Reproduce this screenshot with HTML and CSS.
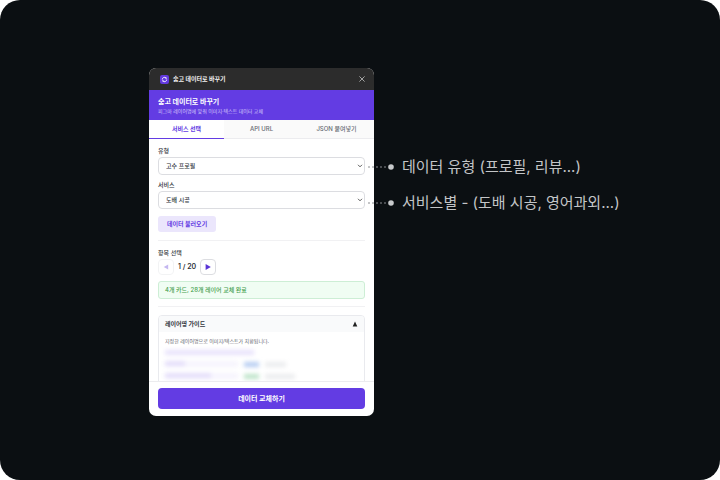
FILE: index.html
```html
<!DOCTYPE html>
<html lang="ko">
<head>
<meta charset="utf-8">
<title>숨고 데이터로 바꾸기</title>
<link rel="stylesheet" href="styles.css">
</head>
<body>
<main class="stage">
  <section class="panel">
    <div class="titlebar">
      <svg class="logo" viewBox="0 0 18 18" aria-hidden="true">
        <rect width="18" height="18" rx="4" fill="#6239df"/>
        <path d="M4.6 9A4.4 4.4 0 0 1 12 5.8M13.4 9A4.4 4.4 0 0 1 6 12.2" fill="none" stroke="#fff" stroke-width="1.8"/>
        <path d="M13.4 4.4v3.2h-3.2zM4.6 13.6v-3.2h3.2z" fill="#fff"/>
      </svg>
      <span class="titlebar-name">숨고 데이터로 바꾸기</span>
      <button class="close" type="button" aria-label="닫기">
        <svg viewBox="0 0 6 6" aria-hidden="true"><path d="M.4.4l5.2 5.2M5.6.4L.4 5.6" stroke="#d6d6d6" stroke-width=".7"/></svg>
      </button>
    </div>
    <header class="hero">
      <h1>숨고 데이터로 바꾸기</h1>
      <p>피그마 레이어명에 맞춰 이미지·텍스트 데이터 교체</p>
    </header>
    <nav class="tabs">
      <button class="tab active" type="button">서비스 선택</button>
      <button class="tab" type="button">API URL</button>
      <button class="tab" type="button">JSON 붙여넣기</button>
    </nav>
    <div class="content">
      <div class="field">
        <label for="kind">유형</label>
        <div class="select">
          <select id="kind"><option>고수 프로필</option></select>
          <svg viewBox="0 0 6 4" aria-hidden="true"><path d="M1 .8l2 2 2-2" fill="none" stroke="#333" stroke-width=".8"/></svg>
        </div>
      </div>
      <div class="field">
        <label for="service">서비스</label>
        <div class="select">
          <select id="service"><option>도배 시공</option></select>
          <svg viewBox="0 0 6 4" aria-hidden="true"><path d="M1 .8l2 2 2-2" fill="none" stroke="#333" stroke-width=".8"/></svg>
        </div>
      </div>
      <button class="load" type="button">데이터 불러오기</button>
      <div class="picker">
        <h2>항목 선택</h2>
        <div class="pager">
          <button class="step" type="button" aria-label="이전" disabled><svg viewBox="0 0 6 6" aria-hidden="true"><path d="M5.2.5v5L.7 3z"/></svg></button>
          <span>1 / 20</span>
          <button class="step" type="button" aria-label="다음"><svg viewBox="0 0 6 6" aria-hidden="true"><path d="M.6 0v6L5.8 3z"/></svg></button>
        </div>
        <p class="status">4개 카드, 28개 레이어 교체 완료</p>
      </div>
      <section class="guide">
        <button class="guide-head" type="button">레이어명 가이드
          <svg viewBox="0 0 6 6" aria-hidden="true"><path d="M3 .5l2.3 5H.7z"/></svg>
        </button>
        <div class="guide-body">
          <p>지정한 레이어명으로 이미지/텍스트가 치환됩니다.</p>
          <div class="masked" aria-hidden="true">
            <i class="bar heading"></i>
            <div class="masked-row"><span class="cell"><i class="bar short"></i></span><i class="bar blue"></i><i class="bar note"></i></div>
            <div class="masked-row"><span class="cell"><i class="bar long"></i></span><i class="bar green"></i><i class="bar note wide"></i></div>
          </div>
        </div>
      </section>
    </div>
    <footer class="actions"><button class="submit" type="button">데이터 교체하기</button></footer>
  </section>
  <ul class="callouts">
    <li><svg viewBox="0 0 26 6" aria-hidden="true"><path class="lead" d="M0 3h20"/><circle cx="23" cy="3" r="2.8"/></svg>데이터 유형 (프로필, 리뷰...)</li>
    <li><svg viewBox="0 0 26 6" aria-hidden="true"><path class="lead" d="M0 3h20"/><circle cx="23" cy="3" r="2.8"/></svg>서비스별 - (도배 시공, 영어과외...)</li>
  </ul>
</main>
</body>
</html>
```
FILE: styles.css
```css
* { box-sizing: border-box; margin: 0; padding: 0; }

body {
  background: #fff;
  color: #30343b;
  font: 500 6px/8px Inter, "Noto Sans CJK KR", sans-serif;
}

button, select { font: inherit; color: inherit; border: 0; background: none; }
h1, h2 { font: inherit; }
svg { display: block; flex: none; }

.stage {
  display: flex;
  align-items: flex-start;
  min-height: 100vh;
  padding: 68px 0 64px 149px;
  background: #0b0f12;
  border-radius: 20px;
}

.panel {
  flex: none;
  width: 225px;
  overflow: hidden;
  background: #fff;
  border-radius: 7px;
}

.titlebar {
  display: flex;
  align-items: center;
  gap: 4px;
  height: 22px;
  padding: 0 9px 0 11px;
  background: #2c2c2c;
  color: #f2f2f2;
  font-weight: 700;
}
.logo { width: 9px; height: 9px; }
.titlebar-name { flex: 1; }
.close svg { width: 6px; height: 6px; }

.hero {
  height: 30px;
  padding: 6px 9px 0;
  background: #633ce3;
  color: #fff;
}
.hero h1 { font-size: 7px; line-height: 11px; font-weight: 700; }
.hero p { color: #d3c7fa; font-size: 5px; font-weight: 400; }

.tabs {
  display: grid;
  grid-template-columns: repeat(3, 1fr);
  height: 19px;
  background: #fafafa;
}
.tab { border-bottom: 1px solid #ececef; color: #666b73; }
.tab.active { background: #fff; border-color: #633ce3; color: #633ce3; font-weight: 700; }

.content { height: 242px; padding: 8px 9px 0; overflow: hidden; }

.field { margin-bottom: 6px; }
.field label { display: block; margin-bottom: 2px; }
.select { position: relative; }
.select select {
  display: block;
  width: 100%;
  height: 18px;
  padding: 0 7px;
  appearance: none;
  border: 1px solid #dcdde1;
  border-radius: 4px;
  background: #fff;
}
.select svg { position: absolute; top: 7px; right: 2px; width: 6px; height: 4px; }

.load {
  height: 16px;
  padding: 0 9px;
  margin-top: 1px;
  border-radius: 3px;
  background: #ebe6fc;
  color: #633ce3;
  font-weight: 600;
}

.picker {
  margin: 8px 0;
  padding: 8px 0 7px;
  border-top: 1px solid #f1f1f3;
  border-bottom: 1px solid #f1f1f3;
}
.pager { display: flex; align-items: center; gap: 4px; margin: 2px 0 6px; font-size: 7px; font-weight: 600; }
.step {
  display: grid;
  place-items: center;
  width: 16px;
  height: 16px;
  border: 1px solid #dcdde1;
  border-radius: 4px;
}
.step svg { width: 6px; height: 6px; fill: #5a35d6; }
.step:disabled { opacity: .35; }
.status {
  padding: 4px 6px;
  border: 1px solid #cdeed5;
  border-radius: 3px;
  background: #f0fdf3;
  color: #45a04d;
}

.guide { border: 1px solid #e9eaee; border-radius: 4px; overflow: hidden; }
.guide-head {
  display: flex;
  align-items: center;
  justify-content: space-between;
  width: 100%;
  height: 16px;
  padding: 0 6px;
  background: #f9fafb;
  font-weight: 600;
}
.guide-head svg { width: 6px; height: 6px; fill: #222; }
.guide-body { padding: 5px 6px 12px; font-weight: 400; color: #5f646c; }
.guide-body p { font-size: 5px; }

.masked { display: grid; gap: 6px; padding-top: 5px; filter: blur(2px); }
.masked-row { display: flex; align-items: center; gap: 6px; height: 6px; }
.cell { width: 73px; height: 6px; background: #f6f4fd; }
.bar { display: block; height: 5px; }
.heading { width: 89px; background: #e8e2fb; }
.short { width: 20px; background: #e4ddfa; }
.long { width: 46px; background: #e4ddfa; }
.blue { width: 15px; background: #b5ccf2; }
.green { width: 15px; background: #bce3c8; }
.note { width: 21px; background: #ebecee; }
.wide { width: 30px; }

.actions { padding: 6px 9px 7px; border-top: 1px solid #ececef; }
.submit {
  display: block;
  width: 100%;
  height: 21px;
  border-radius: 4px;
  background: #633ce3;
  color: #fff;
  font-size: 7px;
  font-weight: 700;
}

.callouts {
  position: relative;
  display: grid;
  gap: 12px;
  margin: 87px 0 0 -6px;
  list-style: none;
  color: #c3c5c7;
  font-size: 15px;
  line-height: 24px;
  font-weight: 400;
  white-space: nowrap;
}
.callouts li { display: flex; align-items: center; gap: 8px; }
.callouts svg { width: 26px; height: 6px; fill: #c8cacc; }
.lead { stroke: #8b8d90; stroke-dasharray: 2 2; }
```
